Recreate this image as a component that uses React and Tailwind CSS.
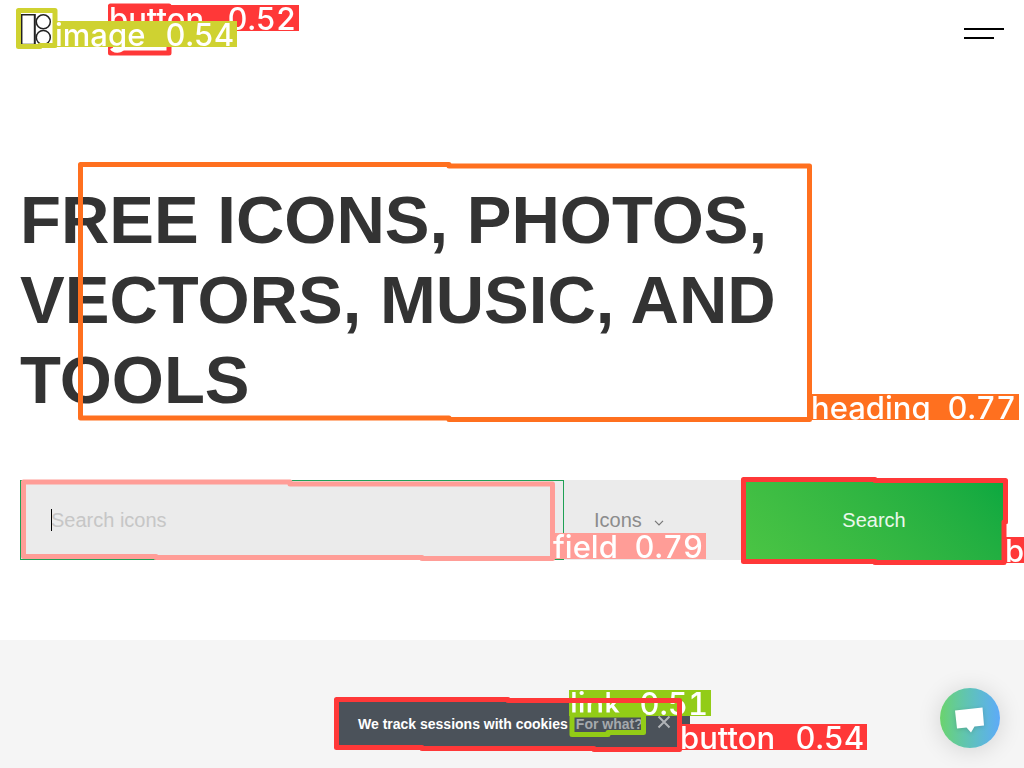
import React from "react";

const boxes = [
  { color: "#ff3838", d: "M110.5 6H169V53H110.5Z" },
  { color: "#ff701f", d: "M80.5 164.5H449V166H809.5V419.5H449V418H80.5Z" },
  { color: "#ff9d97", d: "M23.5 482H290V484H552.5V558.5H422V557.5H156V556.5H23.5Z" },
  { color: "#ff3838", d: "M743.5 479.5H875V480.5H1005.5V522H1004V562.5H875V561.5H743.5Z" },
];

const topBoxes = [
  { color: "#cfd231", d: "M18.5 10.5H55V45.5H40V46.5H18.5Z" },
  { color: "#ff3838", d: "M336.5 699.5H508V700.5H679.5V749.5H594V748.5H422V747.5H336.5Z" },
  { color: "#92cc17", d: "M572 715H643.5V732.5H608V734.5H572Z" },
];

function Boxes({ items }) {
  return (
    <svg className="absolute top-0 left-0" width="1024" height="768" fill="none" strokeWidth="5" strokeLinejoin="round" aria-hidden="true">
      {items.map((b) => (
        <path key={b.d} d={b.d} stroke={b.color} />
      ))}
    </svg>
  );
}

function Tag({ name, score, className }) {
  return (
    <div
      className={`absolute flex h-[26px] justify-between whitespace-nowrap pr-[3px] pl-px font-[Inter,sans-serif] text-[31px] leading-[28px] font-medium text-white tabular-nums ${className}`}
    >
      <span>{name}</span>
      <span>{score}</span>
    </div>
  );
}

function Detections() {
  return (
    <div className="pointer-events-none absolute inset-0 overflow-hidden">
      <Tag name="link" score="0.51" className="left-[569px] top-[690px] w-[142px] bg-[#92cc17]" />
      <Boxes items={boxes} />
      <Tag name="button" score="0.52" className="left-[108px] top-[5px] w-[191px] bg-[#ff3838]" />
      <Tag name="heading" score="0.77" className="left-[810px] top-[394px] w-[209px] bg-[#ff701f]" />
      <Tag name="field" score="0.79" className="left-[552px] top-[533px] w-[154px] bg-[#ff9d97]" />
      <Tag name="b" className="left-[1004px] top-[537px] w-[40px] bg-[#ff3838]" />
      <Boxes items={topBoxes} />
      <Tag name="image" score="0.54" className="left-[54px] top-[21px] w-[183px] bg-[#cfd231]" />
      <Tag name="button" score="0.54" className="left-[679px] top-[724px] w-[188px] bg-[#ff3838]" />
    </div>
  );
}

function Logo() {
  return (
    <svg width="32" height="32" viewBox="0 0 32 32" fill="none" stroke="#222" strokeWidth="1.5" aria-hidden="true">
      <path d="M14.5 1.8H1.7V31.5H14.5" />
      <path d="M14.8 1V31" strokeWidth="2" />
      <circle cx="23.3" cy="8.8" r="7" />
      <circle cx="23.3" cy="24.5" r="7" />
    </svg>
  );
}

export default function App() {
  return (
    <div className="relative flex min-h-screen flex-col bg-white font-['Liberation_Sans',Arial,sans-serif] text-[#333]">
      <header className="flex items-start justify-between px-5 pt-[13px]">
        <a href="#home" aria-label="Home">
          <Logo />
        </a>
        <button type="button" aria-label="Menu" className="mt-[15px] flex w-10 flex-col gap-[7px]">
          <span className="h-[2px] w-10 bg-black" />
          <span className="h-[2px] w-[30px] bg-black" />
        </button>
      </header>

      <main className="px-5 pt-[135px] pb-20">
        <h1 className="max-w-[800px] text-[67px] leading-[80px] font-bold text-[#333]">
          FREE ICONS, PHOTOS, VECTORS, MUSIC, AND TOOLS
        </h1>
        <form className="mt-[60px] flex h-20" onSubmit={(e) => e.preventDefault()}>
          <div className="relative flex-1">
            <input
              type="text"
              aria-label="Search icons"
              placeholder="Search icons"
              className="h-full w-full border border-[#1fa055] bg-[#ebebeb] px-[30px] text-xl outline-none placeholder:text-[#c6c6c6]"
            />
            <span className="absolute top-[29px] left-[31px] h-[22px] w-px bg-black" />
          </div>
          <div className="relative w-[180px]">
            <select
              aria-label="Content type"
              className="h-full w-full appearance-none bg-[#ebebeb] px-[30px] text-xl text-[#8c8c8c] outline-none"
            >
              <option>Icons</option>
            </select>
            <svg className="pointer-events-none absolute top-10 left-[90px]" width="10" height="6" viewBox="0 0 10 6" fill="none" stroke="#777" strokeWidth="1.2" aria-hidden="true">
              <path d="M1 .8L5 4.8L9 .8" />
            </svg>
          </div>
          <button type="submit" className="w-[260px] bg-linear-45 from-[#4bc544] to-[#09a840] text-xl text-white/90">
            Search
          </button>
        </form>
      </main>

      <section className="flex-1 bg-[#f5f5f5]" />

      <div className="fixed bottom-5 left-1/2 flex h-12 w-[356px] -translate-x-1/2 items-center bg-[#4b525a] pl-6 text-sm font-bold text-white">
        <span className="whitespace-nowrap">We track sessions with cookies</span>
        <a href="#cookies" className="ml-2 whitespace-nowrap text-[#a5a9ad]">
          For what?
        </a>
        <button type="button" aria-label="Close" className="mr-[19px] mb-1 ml-auto">
          <svg width="14" height="14" viewBox="0 0 14 14" stroke="#b0b3b7" strokeWidth="2" aria-hidden="true">
            <path d="M1.5 1.5L12.5 12.5M12.5 1.5L1.5 12.5" />
          </svg>
        </button>
      </div>

      <button
        type="button"
        aria-label="Open chat"
        className="fixed right-6 bottom-5 size-[60px] rounded-full bg-linear-to-r from-[#6bd36b] to-[#5eaaf8] shadow-[0_2px_24px_rgba(0,0,0,0.14)]"
      >
        <svg width="60" height="60" viewBox="0 0 60 60" fill="white" className="drop-shadow-sm" aria-hidden="true">
          <path d="M15 22.5L42.5 19.5L44 37.5L34.5 38.5L31 44.5L26.5 39.5L17 40.5Z" />
        </svg>
      </button>

      <Detections />
    </div>
  );
}
